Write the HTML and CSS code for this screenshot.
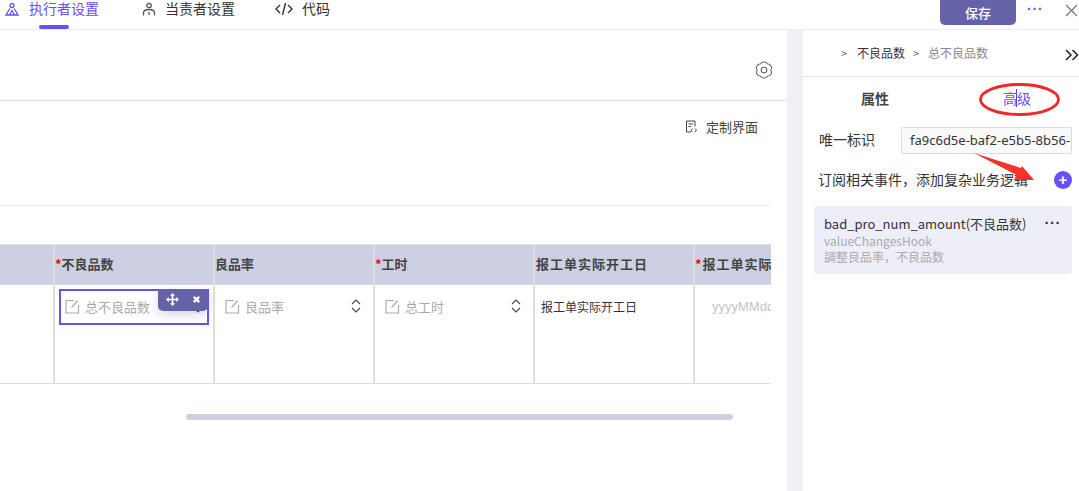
FILE: index.html
```html
<!DOCTYPE html>
<html lang="zh">
<head>
<meta charset="utf-8">
<title>执行者设置</title>
<link rel="stylesheet" href="styles.css">
</head>
<body>
<div class="app">
  <header class="topbar">
    <nav class="tabs">
      <div class="tab tab-active">
        <svg class="tab-icon" viewBox="0 0 14 14" width="14" height="14" fill="none" stroke="currentColor" stroke-width="1.300"><circle cx="7" cy="3.500" r="2"/><path d="M4.800 6.500 1 13h12L9.200 6.500M4.500 13 7 8.500 9.500 13"/></svg>
        <span>执行者设置</span>
        <i class="tab-bar"></i>
      </div>
      <div class="tab tab-2">
        <svg class="tab-icon" viewBox="0 0 14 14" width="14" height="14" fill="none" stroke="#555" stroke-width="1.300"><circle cx="7" cy="3.500" r="2.200"/><path d="M1.500 13.500v-2.500c0-2 2-3.500 5.500-3.500s5.500 1.500 5.500 3.500v2.500M7 10v3"/></svg>
        <span>当责者设置</span>
      </div>
      <div class="tab tab-3">
        <svg class="tab-icon" viewBox="0 0 18 14" width="18" height="14" fill="none" stroke="#333" stroke-width="1.400"><path d="M5 3 1 7l4 4M13 3l4 4-4 4M10.500 1 7.500 13"/></svg>
        <span>代码</span>
      </div>
    </nav>
    <div class="top-actions">
      <button class="save">保存</button>
      <span class="dots">···</span>
      <svg class="close" viewBox="0 0 14 14" width="14" height="14" fill="none" stroke="#777" stroke-width="1.200"><path d="M2 2l11 11M13 2 2 13"/></svg>
    </div>
  </header>
  <div class="body">
    <main class="main">
      <div class="settings-row">
        <svg viewBox="0 0 18 18" width="18" height="18" fill="none" stroke="#666" stroke-width="1.100" stroke-linejoin="round"><path d="M6 2.200Q6.800 1 9 1T12 2.200Q12.700 3.200 14 3.200 15.300 3.400 16.300 5.500 17 7 16.200 8 15.500 9 16.200 10 17 11 16.300 12.500 15.300 14.600 14 14.800 12.700 14.800 12 15.800 11.200 17 9 17T6 15.800Q5.300 14.800 4 14.800 2.700 14.600 1.700 12.500 1 11 1.800 10 2.500 9 1.800 8 1 7 1.700 5.500 2.700 3.400 4 3.200 5.300 3.200 6 2.200z"/><circle cx="9" cy="9" r="2.800"/></svg>
      </div>
      <div class="custom-row">
        <div class="custom">
          <svg viewBox="0 0 12 13" width="12" height="13" fill="none" stroke="#444" stroke-width="1"><path d="M6 12H1.500V1h8.500v5.500M3.500 4h4.500M3.500 6.500h2.500M7.500 8.500 6 10.200l1.500 1.800M10 8.500l1.500 1.700L10 12"/></svg>
          <span>定制界面</span>
        </div>
      </div>
      <div class="table-wrap">
        <div class="table">
          <div class="col col-first"><div class="th"></div><div class="td"></div></div>
          <div class="col">
            <div class="th"><b>*</b>不良品数</div>
            <div class="td">
              <div class="field field-selected">
                <svg class="edit" viewBox="0 0 15 15" width="15" height="15" fill="none" stroke="#aaa" stroke-width="1.200"><path d="M9 1.500H1v12.500h12.500V6M6.500 8.500 13 1.500"/></svg>
                <span class="ph">总不良品数</span>
                <svg class="spin spin-under" viewBox="0 0 10 14" width="10" height="14" fill="none" stroke="#444" stroke-width="1.100"><path d="M1 5l4-4 4 4M1 9l4 4 4-4"/></svg>
                <div class="float-tools">
                  <svg viewBox="0 0 12 12" width="13" height="13" fill="#fff"><path d="M6 0l2.400 2.600H6.800v2.600h2.600V3.600L12 6 9.400 8.400V6.800H6.800v2.600h1.600L6 12 3.600 9.400h1.600V6.800H2.600v1.600L0 6l2.600-2.400v1.600h2.600V2.600H3.600z"/></svg>
                  <svg viewBox="0 0 10 10" width="9" height="9" fill="none" stroke="#fff" stroke-width="2.600"><path d="M2 2l6 6M8 2 2 8"/></svg>
                </div>
              </div>
            </div>
          </div>
          <div class="col">
            <div class="th">良品率</div>
            <div class="td">
              <div class="field">
                <svg class="edit" viewBox="0 0 15 15" width="15" height="15" fill="none" stroke="#aaa" stroke-width="1.200"><path d="M9 1.500H1v12.500h12.500V6M6.500 8.500 13 1.500"/></svg>
                <span class="ph">良品率</span>
                <svg class="spin" viewBox="0 0 10 14" width="10" height="14" fill="none" stroke="#444" stroke-width="1.100"><path d="M1 5l4-4 4 4M1 9l4 4 4-4"/></svg>
              </div>
            </div>
          </div>
          <div class="col">
            <div class="th"><b>*</b>工时</div>
            <div class="td">
              <div class="field">
                <svg class="edit" viewBox="0 0 15 15" width="15" height="15" fill="none" stroke="#aaa" stroke-width="1.200"><path d="M9 1.500H1v12.500h12.500V6M6.500 8.500 13 1.500"/></svg>
                <span class="ph">总工时</span>
                <svg class="spin" viewBox="0 0 10 14" width="10" height="14" fill="none" stroke="#444" stroke-width="1.100"><path d="M1 5l4-4 4 4M1 9l4 4 4-4"/></svg>
              </div>
            </div>
          </div>
          <div class="col">
            <div class="th th-wide th-indent">报工单实际开工日</div>
            <div class="td"><div class="plain-text">报工单实际开工日</div></div>
          </div>
          <div class="col col-last">
            <div class="th th-wide"><b>*</b>报工单实际</div>
            <div class="td"><div class="date-ph">yyyyMMdd</div></div>
          </div>
        </div>
        <div class="scroll-track"><div class="scroll-thumb"></div></div>
      </div>
    </main>
    <div class="strip"></div>
    <aside class="panel">
      <div class="crumbs">
        <span class="sep">&gt;</span><span class="crumb">不良品数</span>
        <span class="sep sep-2">&gt;</span><span class="crumb-cur">总不良品数</span>
        <svg class="collapse" viewBox="0 0 14 12" width="14" height="12" fill="none" stroke="#222" stroke-width="1.500"><path d="M1 1l5 5-5 5M7.500 1l5 5-5 5"/></svg>
      </div>
      <div class="panel-tabs">
        <span class="ptab">属性</span>
        <span class="ptab ptab-active">高级</span>
      </div>
      <div class="form-row">
        <label class="form-label">唯一标识</label>
        <div class="id-input">fa9c6d5e-baf2-e5b5-8b56-</div>
      </div>
      <div class="event-row">
        <span>订阅相关事件，添加复杂业务逻辑</span>
        <span class="add">+</span>
      </div>
      <div class="card">
        <div class="card-title"><span>bad_pro_num_amount(不良品数)</span><span class="card-more">···</span></div>
        <div class="card-sub">valueChangesHook</div>
        <div class="card-sub card-sub-tc">調整良品率，不良品数</div>
      </div>
    </aside>
  </div>
  <svg class="annotation" viewBox="0 0 1079 491" width="1079" height="491" fill="none">
    <ellipse cx="1019.500" cy="99.500" rx="39" ry="15" stroke="#f02828" stroke-width="2.800"/>
    <path d="M1016.500 89v18" stroke="#5a3ff0" stroke-width="1"/>
    <path d="M974 153 1021 168 1022 166 1034 180 1014 180 1016.500 175z" fill="#f5332b"/>
  </svg>
</div>
</body>
</html>
```
FILE: styles.css
```css
* { box-sizing: border-box; }
html, body { margin: 0; padding: 0; }
body {
  width: 1079px;
  height: 491px;
  overflow: hidden;
  background: #fff;
  font-family: "Noto Sans CJK SC", "Noto Sans", sans-serif;
  font-size: 14px;
  color: #333;
}
.app { position: relative; width: 1079px; height: 491px; display: flex; flex-direction: column; }
.topbar {
  height: 30px;
  flex: none;
  border-bottom: 1px solid #eceef2;
  display: flex;
  justify-content: space-between;
}
.tabs { display: flex; padding-left: 5px; }
.tab { position: relative; display: flex; align-items: flex-start; gap: 10px; height: 29px; line-height: 16px; color: #333; }
.tab-icon { margin-top: 2px; flex: none; }
.tab-active { color: #6a4ff8; width: 137px; }
.tab-2 { width: 133px; gap: 9px; }
.tab-3 { gap: 9px; }
.tab-bar { position: absolute; left: 34px; top: 25px; width: 30px; height: 4px; border-radius: 2px; background: #6a4ff8; }
.top-actions { display: flex; align-items: flex-start; }
.save {
  width: 76px;
  height: 25px;
  border: 0;
  border-radius: 0 0 5px 5px;
  background: #6563a8;
  color: #fff;
  font: 500 13px "Noto Sans CJK SC", sans-serif;
  padding: 0;
}
.dots { width: 48px; padding: 2px 0 0 11px; color: #6a4ff8; font: bold 14px/14px "Liberation Sans", sans-serif; letter-spacing: .8px; }
.close { margin-top: 3px; margin-right: 1px; }

.body { flex: 1; display: flex; min-height: 0; }
.main { width: 787px; flex: none; display: flex; flex-direction: column; }
.settings-row {
  height: 71px;
  border-bottom: 1px solid #dcdcdc;
  display: flex;
  justify-content: flex-end;
  align-items: flex-start;
  padding: 31px 14px 0 0;
}
.custom-row {
  width: 771px;
  height: 105px;
  border-bottom: 1px solid #eeeeee;
  display: flex;
  justify-content: flex-end;
  padding: 16px 13px 0 0;
}
.custom { display: flex; align-items: center; gap: 9px; height: 18px; font-size: 13px; color: #444; }
.table-wrap { width: 771px; margin-top: 38px; overflow: hidden; }
.table { display: flex; width: 771px; border-top: 1px solid #e2e2e2; border-bottom: 1px solid #dedede; height: 140px; overflow: hidden; }
.col { width: 160px; flex: none; border-right: 2px solid #dedede; }
.col-first { width: 55px; }
.col-last { border-right: 0; }
.th {
  height: 40px;
  background: #cdd0e3;
  border-bottom: 1px solid #d8d8e0;
  font-size: 13px;
  font-weight: 700;
  line-height: 38px;
  color: #444;
  white-space: nowrap;
  overflow: hidden;
}
.th b { color: #f00; font-weight: 700; }
.th-wide { letter-spacing: 1px; }
.th-indent { padding-left: 1px; }
.td { height: 98px; padding: 4px; }
.field {
  position: relative;
  height: 36px;
  display: flex;
  align-items: center;
  padding: 0 4px 2px 6px;
}
.field-selected { border: 2px solid #6a4ff8; padding-left: 4px; padding-bottom: 2px; }
.edit { flex: none; margin-right: 5px; }
.ph { font-size: 13px; color: #aaa; }
.spin { margin-left: auto; margin-right: 4px; }
.spin-under { margin-right: 0; }
.float-tools {
  position: absolute;
  top: -2px;
  right: -1px;
  width: 50px;
  height: 22px;
  background: #6563a8;
  border-radius: 0 0 5px 5px;
  display: flex;
  align-items: center;
  justify-content: space-around;
  padding: 0 1px 2px;
  box-shadow: 0 4px 10px rgba(101, 99, 168, .25);
}
.plain-text { font-size: 12px; line-height: 36px; padding-left: 2px; color: #333; white-space: nowrap; }
.date-ph { font-size: 13px; line-height: 36px; padding-left: 13px; color: #c4c4c4; white-space: nowrap; overflow: hidden; font-family: "Liberation Sans", sans-serif; }
.scroll-track { padding: 30px 38px 0 186px; }
.scroll-thumb { height: 6px; border-radius: 3px; background: #cdd0e3; }

.strip { width: 16px; flex: none; background: #eef0f5; }
.panel { flex: 1; min-width: 0; display: flex; flex-direction: column; }
.crumbs {
  height: 47px;
  border-bottom: 1px solid #e6e6ea;
  display: flex;
  align-items: center;
  padding-left: 38px;
  padding-bottom: 1px;
  font-size: 12px;
}
.sep { color: #666; font-size: 11px; width: 16px; }
.sep-2 { margin-left: 8px; width: 15px; }
.crumb { color: #333; }
.crumb-cur { color: #888; font-size: 12px; }
.collapse { margin-left: auto; margin-right: 0; margin-top: 5px; }
.panel-tabs { height: 46px; display: flex; }
.ptab { line-height: 42px; font-weight: 700; color: #444; margin-left: 58px; }
.ptab-active { color: #6a4ff8; font-weight: 400; margin-left: 114px; }
.form-row { display: flex; align-items: center; height: 27px; margin-top: 4px; padding-left: 16px; }
.form-label { width: 82px; color: #333; line-height: 25px; align-self: flex-start; }
.id-input {
  width: 171px;
  height: 27px;
  border: 1px solid #dcdcdc;
  border-radius: 2px;
  background: #fafafa;
  font: 13px/25px "Noto Sans", sans-serif;
  color: #333;
  padding-left: 8px;
  white-space: nowrap;
  overflow: hidden;
}
.event-row { display: flex; justify-content: space-between; align-items: center; height: 24px; margin-top: 14px; padding: 0 7px 0 15px; color: #333; }
.event-row > span:first-child { line-height: 22px; align-self: flex-start; }
.add {
  width: 18px;
  height: 18px;
  border-radius: 50%;
  background: #6a4ff8;
  color: #fff;
  font: bold 15px/17px "Liberation Sans", sans-serif;
  text-align: center;
}
.card { margin: 14px 7px 0 11px; height: 68px; background: #eeeef8; border-radius: 4px; padding: 9px 10px; }
.card-title { display: flex; justify-content: space-between; font-size: 13px; line-height: 18px; color: #333; }
.card-more { color: #333; font: bold 15px/16px "Liberation Sans", sans-serif; letter-spacing: .5px; margin-right: 1px; }
.card-sub { font-size: 12px; line-height: 15px; color: #aaa; }
.card-sub-tc { font-family: "Noto Sans CJK TC", sans-serif; line-height: 17px; }
.annotation { position: absolute; left: 0; top: 0; pointer-events: none; }
```
